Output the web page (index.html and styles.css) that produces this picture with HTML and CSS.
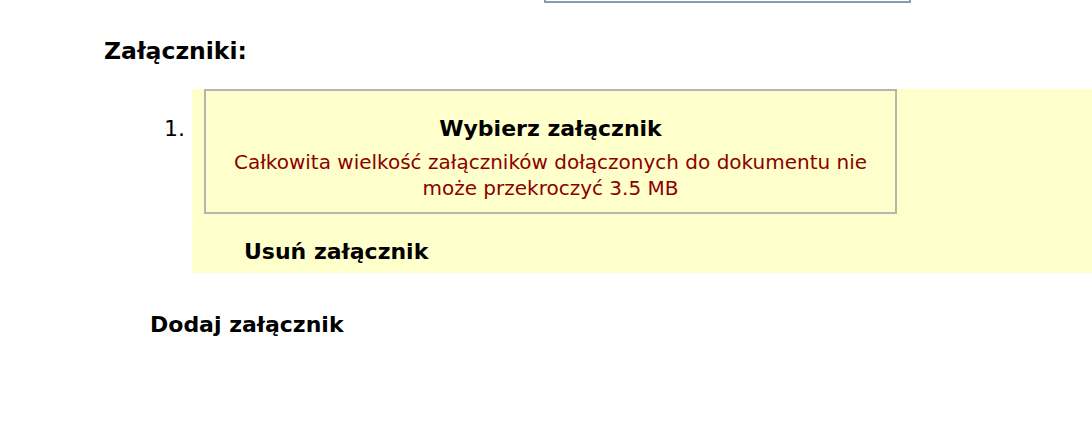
FILE: index.html
```html
<!DOCTYPE html>
<html>
	<head>
		<meta charset="utf-8" />
		<title>Załączniki</title>
		<link rel="stylesheet" href="styles.css">
	</head>
	<body>
		<div class="page">
			<div class="prev-field"></div>

			<h2 class="section-title">Załączniki:</h2>

			<ol class="attachments">
				<li class="attachment">
					<div class="file-box">
						<div class="file-pick">Wybierz załącznik</div>
						<div class="file-note">Całkowita wielkość załączników dołączonych do dokumentu nie może przekroczyć 3.5 MB</div>
					</div>
					<div class="remove-link">Usuń załącznik</div>
				</li>
			</ol>

			<div class="add-link">Dodaj załącznik</div>
		</div>
	</body>
</html>
```

FILE: styles.css
```css
body {
	margin: 0;
	font-family: 'DejaVu Sans', Verdana, sans-serif;
	font-size: 20px;
	color: #000;
	background: #fff;
}

.page {
	width: 1092px;
}

/* cut-off field from the section above */
.prev-field {
	margin-left: 544px;
	width: 363px;
	height: 1px;
	border: 2px solid #8a9bab;
	border-top: none;
}

.section-title {
	margin: 34px 0 0 104px;
	font-size: 23.5px;
	font-weight: bold;
	line-height: 28px;
}

/* Attachments list */
.attachments {
	margin: 24px 0 0 0;
	padding-left: 192px;
}

.attachment {
	background: #ffffcc;
	padding-bottom: 8px;
}

.attachment::marker {
	font-size: 22px;
}

.file-box {
	margin-left: 12px;
	width: 689px;
	border: 2px solid #b5b5b5;
	text-align: center;
	padding: 25px 0 11px;
}

.file-pick {
	font-size: 22px;
	font-weight: bold;
	line-height: 26px;
}

.file-note {
	margin: 7px auto 0;
	width: 660px;
	color: #8b0000;
	line-height: 26px;
}

.remove-link {
	margin: 25px 0 0 52px;
	font-size: 22px;
	font-weight: bold;
	line-height: 26px;
}

.add-link {
	margin: 39px 0 0 150px;
	font-size: 22px;
	font-weight: bold;
	line-height: 26px;
}
```
